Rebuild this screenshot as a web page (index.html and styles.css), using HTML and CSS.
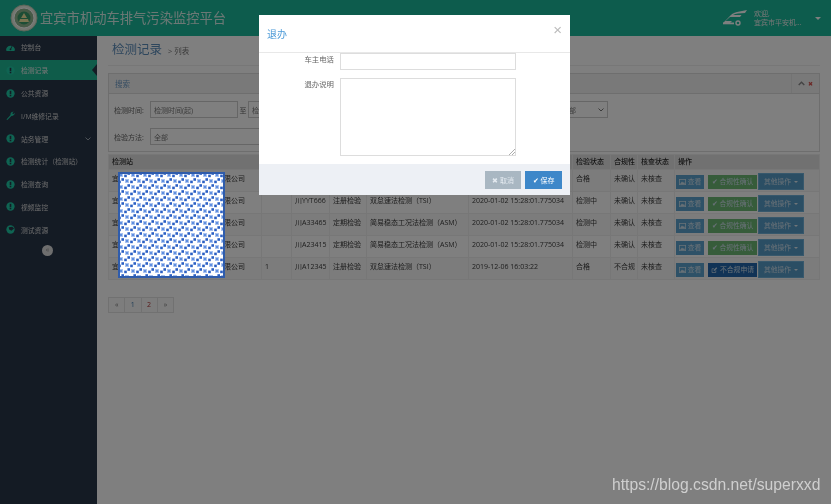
FILE: index.html
```html
<!DOCTYPE html>
<html lang="zh">
<head>
<meta charset="utf-8">
<title>检测记录</title>
<link rel="stylesheet" href="styles.css">
</head>
<body>
<svg class="defs" width="0" height="0">
  <defs>
    <symbol id="warn" viewBox="0 0 10 10"><circle cx="5" cy="5" r="4.6" fill="#1fc8a5"/><rect x="4.1" y="2" width="1.8" height="3.8" fill="#283649"/><rect x="4.1" y="6.5" width="1.8" height="1.6" fill="#283649"/></symbol>
    <symbol id="pic" viewBox="0 0 7 6"><rect x=".4" y=".4" width="6.2" height="5.2" fill="none" stroke="currentColor" stroke-width=".8"/><path d="M1 5 3 2.500 4.200 3.800 5 3 6 5z" fill="currentColor"/></symbol>
    <symbol id="edit" viewBox="0 0 7 7"><path d="M5 4v2.400H.6V2H3" fill="none" stroke="currentColor" stroke-width=".8"/><path d="M2.500 4.500 2.700 3.200 5.600.4 6.600 1.400 3.800 4.300z" fill="currentColor"/></symbol>
    <pattern id="dots" width="12" height="12" patternUnits="userSpaceOnUse">
      <rect width="12" height="12" fill="#fff"/>
      <rect x="1" y="1" width="4" height="4" fill="#a9c2ef"/><rect x="2" y="2" width="2" height="2" fill="#5f8fe0"/>
      <rect x="7" y="7" width="4" height="4" fill="#a9c2ef"/><rect x="8" y="8" width="2" height="2" fill="#5f8fe0"/>
      <rect x="6.200" y="2.600" width="2.600" height="2.600" fill="#2a5fc4"/><rect x="9.400" y="0.200" width="2.600" height="2.600" fill="#2a5fc4"/>
      <rect x="0.200" y="8.600" width="2.600" height="2.600" fill="#2a5fc4"/><rect x="3.400" y="6.200" width="2.600" height="2.600" fill="#2a5fc4"/>
    </pattern>
  </defs>
</svg>

<div class="app">
  <header class="topbar">
    <div class="brand">
      <svg class="emblem" width="28" height="28" viewBox="0 0 28 28">
        <circle cx="14" cy="14" r="13" fill="#e9efe2" stroke="#b8cbb2"/>
        <circle cx="14" cy="14" r="10" fill="#8fb58e" stroke="#fff"/>
        <circle cx="14" cy="14" r="6.5" fill="#3a9a6a"/>
        <path d="M9 18h10l-1-3h-8zM11 14l3-5 3 5z" fill="#f2e6a0"/>
      </svg>
      <span class="brand-name">宜宾市机动车排气污染监控平台</span>
    </div>
    <div class="account">
      <svg width="26" height="16" viewBox="0 0 26 16">
        <path d="M25 0 L15 2 Q10 3 7 7 L1 13 H8 L10 11 H3.5 L8 7 H18 L19.5 5 H11 Q13 3.5 16 3.5 L23 3 Z" fill="#fff"/>
        <rect x="1" y="12.5" width="11" height="1.8" fill="#fff"/>
        <circle cx="16" cy="13" r="2" fill="none" stroke="#fff" stroke-width="1.4"/>
      </svg>
      <div class="account-text"><span>欢迎,</span><span>宜宾市平安机...</span></div>
      <span class="caret-down"></span>
    </div>
  </header>

  <div class="body-row">
    <nav class="sidebar">
      <a class="nav-item">
        <svg class="nav-icon" viewBox="0 0 10 10"><path d="M0 8a5 5 0 0 1 10 0l-1 1H1z" fill="#1fc8a5"/><path d="M5 7 7 3" stroke="#283649"/><circle cx="5" cy="7" r="1" fill="#283649"/></svg>
        <span>控制台</span>
      </a>
      <a class="nav-item active">
        <svg class="nav-icon"><use href="#warn"/></svg>
        <span>检测记录</span>
      </a>
      <a class="nav-item"><svg class="nav-icon"><use href="#warn"/></svg><span>公共资源</span></a>
      <a class="nav-item">
        <svg class="nav-icon" viewBox="0 0 10 10"><path d="M0.5 9.5 5 4.5Q4.500 1 8.500 0.500L7 2.500 8 3.500 9.800 2Q9.500 5.500 6 5.500L1.500 10z" fill="#1fc8a5"/></svg>
        <span>I/M维修记录</span>
      </a>
      <a class="nav-item">
        <svg class="nav-icon"><use href="#warn"/></svg><span>站务管理</span>
        <svg class="chev" width="6" height="4" viewBox="0 0 6 4"><path d="M.5.500 3 3 5.500.5" fill="none" stroke="#9aa4ae"/></svg>
      </a>
      <a class="nav-item"><svg class="nav-icon"><use href="#warn"/></svg><span>检测统计（检测站）</span></a>
      <a class="nav-item"><svg class="nav-icon"><use href="#warn"/></svg><span>检测查询</span></a>
      <a class="nav-item"><svg class="nav-icon"><use href="#warn"/></svg><span>视频监控</span></a>
      <a class="nav-item">
        <svg class="nav-icon" viewBox="0 0 10 10"><circle cx="5" cy="5" r="4.6" fill="#1fc8a5"/><path d="M3 2.500 7 2 9 4 6 6.500 3.500 5z" fill="#283649"/></svg>
        <span>测试资源</span>
      </a>
      <div class="collapse-btn">«</div>
    </nav>

    <main class="content">
      <div class="page-head"><h1>检测记录</h1><small>&gt; 列表</small></div>

      <section class="panel">
        <div class="panel-head">
          <span>搜索</span>
          <div class="panel-tools">
            <svg width="7" height="5" viewBox="0 0 7 5"><path d="M.7 4 3.500 1.200 6.300 4" fill="none" stroke="#888" stroke-width="1.400"/></svg>
            <span class="panel-close">✖</span>
          </div>
        </div>
        <div class="panel-body">
          <div class="filter-row">
            <label>检测时间:</label>
            <span class="field w-date">检测时间(起)</span>
            <span class="to">至</span>
            <span class="field w-date2">检</span>
            <span class="field w-sel">部<svg width="6" height="4" viewBox="0 0 6 4"><path d="M.5.500 3 3 5.500.5" fill="none" stroke="#777"/></svg></span>
          </div>
          <div class="filter-row">
            <label>检验方法:</label>
            <span class="field w-method">全部</span>
          </div>
        </div>
      </section>

      <table class="records">
        <colgroup>
          <col class="c1"><col class="c2"><col class="c3"><col class="c4"><col class="c5"><col class="c6"><col class="c7"><col class="c8"><col class="c9"><col class="c10">
        </colgroup>
        <thead>
          <tr><th>检测站</th><th></th><th></th><th></th><th></th><th></th><th>检验状态</th><th>合规性</th><th>核查状态</th><th>操作</th></tr>
        </thead>
        <tbody>
          <tr class="odd"><td>宜宾市平安机动车辆环保检测服务有限公司</td><td></td><td></td><td></td><td></td><td></td><td>合格</td><td>未确认</td><td>未核查</td>
            <td><div class="ops"><a class="btn blue"><svg class="btn-icon"><use href="#pic"/></svg>查看</a><a class="btn green">✔ 合规性确认</a><a class="btn more">其他操作<i class="caret-small"></i></a></div></td></tr>
          <tr><td>宜宾市平安机动车辆环保检测服务有限公司</td><td></td><td>川YYT666</td><td>注册检验</td><td>双怠速法检测（TSI）</td><td>2020-01-02 15:28:01.775034</td><td>检测中</td><td>未确认</td><td>未核查</td>
            <td><div class="ops"><a class="btn blue"><svg class="btn-icon"><use href="#pic"/></svg>查看</a><a class="btn green">✔ 合规性确认</a><a class="btn more">其他操作<i class="caret-small"></i></a></div></td></tr>
          <tr class="odd"><td>宜宾市平安机动车辆环保检测服务有限公司</td><td></td><td>川A33465</td><td>定期检验</td><td>简易稳态工况法检测（ASM）</td><td>2020-01-02 15:28:01.775034</td><td>检测中</td><td>未确认</td><td>未核查</td>
            <td><div class="ops"><a class="btn blue"><svg class="btn-icon"><use href="#pic"/></svg>查看</a><a class="btn green">✔ 合规性确认</a><a class="btn more">其他操作<i class="caret-small"></i></a></div></td></tr>
          <tr><td>宜宾市平安机动车辆环保检测服务有限公司</td><td></td><td>川A23415</td><td>定期检验</td><td>简易稳态工况法检测（ASM）</td><td>2020-01-02 15:28:01.775034</td><td>检测中</td><td>未确认</td><td>未核查</td>
            <td><div class="ops"><a class="btn blue"><svg class="btn-icon"><use href="#pic"/></svg>查看</a><a class="btn green">✔ 合规性确认</a><a class="btn more">其他操作<i class="caret-small"></i></a></div></td></tr>
          <tr class="odd"><td>宜宾市平安机动车辆环保检测服务有限公司</td><td>1</td><td>川A12345</td><td>注册检验</td><td>双怠速法检测（TSI）</td><td>2019-12-06 16:03:22</td><td>合格</td><td>不合规</td><td>未核查</td>
            <td><div class="ops"><a class="btn blue"><svg class="btn-icon"><use href="#pic"/></svg>查看</a><a class="btn navy"><svg class="btn-icon"><use href="#edit"/></svg>不合规申请</a><a class="btn more">其他操作<i class="caret-small"></i></a></div></td></tr>
        </tbody>
      </table>

      <div class="pager"><a>«</a><a class="link">1</a><a class="current">2</a><a>»</a></div>
    </main>
  </div>
</div>

<svg class="qr" width="107" height="106"><rect width="107" height="106" fill="url(#dots)"/><rect x="1" y="1" width="105" height="104" fill="none" stroke="#2f5cab" stroke-width="2"/></svg>

<div class="overlay"></div>

<div class="modal">
  <div class="modal-head"><h2>退办</h2><span class="modal-close">×</span></div>
  <div class="modal-body">
    <div class="form-row"><label>车主电话</label><span class="input"></span></div>
    <div class="form-row"><label>退办说明</label>
      <span class="textarea"><svg class="grip" width="6" height="6" viewBox="0 0 6 6"><path d="M6 0 0 6M6 3 3 6" stroke="#999" stroke-width=".8"/></svg></span>
    </div>
  </div>
  <div class="modal-foot">
    <a class="mbtn cancel">✖ 取消</a>
    <a class="mbtn save">✔ 保存</a>
  </div>
</div>

<div class="watermark">https://blog.csdn.net/superxxd</div>
</body>
</html>
```
FILE: styles.css
```css
* { box-sizing: border-box; }
html, body { margin: 0; height: 100%; }
body {
  position: relative;
  overflow: hidden;
  background: #fff;
  font-family: "Open Sans", "Noto Sans CJK SC", sans-serif;
  font-size: 7px;
  color: #555;
  filter: blur(.45px);
}
.defs { position: absolute; }
.app { display: flex; flex-direction: column; height: 504px; }

.topbar {
  flex: 0 0 36px;
  display: flex;
  align-items: center;
  justify-content: space-between;
  background: #1ab89a;
  color: #fff;
  padding: 0 10px;
}
.brand { display: flex; align-items: center; gap: 2px; }
.brand-name { font-size: 13.3px; line-height: 18px; color: #d8f0ea; }
.account { display: flex; align-items: center; }
.account svg { margin-right: 6px; }
.account-text { display: flex; flex-direction: column; width: 58px; line-height: 9px; font-size: 7px; color: #eee; margin-right: 3px; }
.caret-down { width: 0; height: 0; border: 3px solid transparent; border-top: 3.500px solid #fff; border-bottom: 0; }

.body-row { flex: 1; display: flex; min-height: 0; }
.sidebar { flex: 0 0 97px; background: #283649; }
.nav-item {
  display: flex;
  align-items: center;
  position: relative;
  height: 22.750px;
  padding-left: 6px;
  gap: 6px;
  color: #d6d6d6;
  font-size: 6.800px;
}
.nav-item.active { background: #1fb894; color: #eee; height: 20px; margin: 1.500px 0; }
.nav-item.active::after {
  content: "";
  position: absolute;
  right: 0;
  top: 4px;
  border: 6px solid transparent;
  border-left: 0;
  border-right: 5px solid #283649;
}
.nav-icon { width: 9px; height: 9px; flex: none; }
.chev { position: absolute; right: 6px; top: 10px; }
.collapse-btn {
  width: 11px;
  height: 11px;
  margin: 4px 0 0 42px;
  border-radius: 50%;
  background: #ddd;
  color: #888;
  font-size: 7px;
  line-height: 10px;
  text-align: center;
}

.content { flex: 1; min-width: 0; background: #fff; padding: 0 11px; }
.page-head {
  display: flex;
  align-items: baseline;
  gap: 6px;
  height: 30px;
  margin-bottom: 7px;
  padding: 5px 4px 0;
  border-bottom: 1px solid #eee;
}
.page-head h1 { margin: 0; font-weight: 400; font-size: 12.500px; line-height: 18px; color: #5b8dbb; }
.page-head small { font-size: 7.500px; color: #777; }

.panel { height: 79px; border: 1px solid #ddd; margin-bottom: 2px; }
.panel-head {
  display: flex;
  justify-content: space-between;
  align-items: center;
  height: 20px;
  padding: 0 6px;
  background: #f2f2f2;
  border-bottom: 1px solid #ddd;
  color: #6c9ac5;
  font-size: 7.500px;
}
.panel-tools { display: flex; align-items: center; gap: 3px; height: 100%; padding-left: 6px; border-left: 1px solid #e6e6e6; }
.panel-close { color: #d9534f; font-size: 6px; }
.panel-body { display: flex; flex-direction: column; gap: 10px; padding: 7px 5px; }
.filter-row { display: flex; align-items: center; height: 17px; color: #666; }
.filter-row label { width: 36px; }
.field { display: flex; align-items: center; justify-content: space-between; height: 17px; padding: 0 3px; border: 1px solid #ccc; background: #fff; color: #777; }
.w-date { width: 88px; }
.to { width: 10px; text-align: center; }
.w-date2 { width: 130px; }
.w-sel { width: 100px; margin-left: 130px; gap: 2px; padding-left: 60px; }
.w-method { width: 400px; }

.records { width: 711px; table-layout: fixed; border-collapse: collapse; color: #3a3a3a; }
.c1 { width: 153px; } .c2 { width: 30px; } .c3 { width: 38px; } .c4 { width: 37px; } .c5 { width: 102px; }
.c6 { width: 104px; } .c7 { width: 38px; } .c8 { width: 27px; } .c9 { width: 37px; } .c10 { width: 145px; }
.records th, .records td {
  height: 22px;
  padding: 0 3px 4px;
  border: 1px solid #eee;
  font-size: 7px;
  line-height: 10px;
  font-weight: 400;
  text-align: left;
  white-space: nowrap;
  overflow: hidden;
}
.records th { height: 15px; padding: 0 3px; background: #e3e3e3; font-weight: 500; color: #2a2a2a; }
.records tr.odd td { background: #f8f8f8; }
.records td:last-child { padding: 2px 0 0 1px; }
.ops { display: flex; align-items: center; gap: 1px; }
.btn { display: flex; align-items: center; justify-content: center; gap: 2px; height: 14px; color: #cfe0ec; font-size: 6.800px; white-space: nowrap; }
.btn-icon { width: 7px; height: 6px; flex: none; }
.btn.blue { width: 28px; margin-right: 3px; background: #5ca3cf; }
.btn.green { width: 49px; background: #6cb974; }
.btn.navy { width: 49px; background: #2266ad; }
.btn.more { width: 46px; height: 17px; background: #579dc9; border: 1px solid #6fb0d8; gap: 3px; }
.caret-small { width: 0; height: 0; border: 2px solid transparent; border-top: 2.500px solid #dfeaf2; border-bottom: 0; }

.pager { display: flex; margin-top: 17px; }
.pager a { width: 17.250px; height: 16px; margin-left: -1px; border: 1px solid #e3e3e3; background: #fafafa; color: #777; line-height: 14px; text-align: center; }
.pager a:first-child { margin-left: 0; }
.pager .link { color: #3c78ad; }
.pager .current { color: #b03535; }

.qr { position: absolute; left: 118px; top: 172px; z-index: 2; }
.overlay { position: absolute; inset: 0; z-index: 1; background: rgba(0, 0, 0, .5); }

.modal {
  position: absolute;
  left: 259px;
  top: 15px;
  z-index: 3;
  display: flex;
  flex-direction: column;
  width: 311px;
  height: 180px;
  background: #fff;
}
.modal-head { display: flex; justify-content: space-between; height: 38px; padding: 8px 8px 0; border-bottom: 1px solid #e8e8e8; }
.modal-head h2 { margin: 0; font-weight: 400; font-size: 10px; line-height: 22px; color: #4d9bd8; }
.modal-close { font-size: 15px; line-height: 14px; color: #bbb; font-family: "Liberation Sans", sans-serif; }
.modal-body { flex: 1; display: flex; flex-direction: column; gap: 8px; }
.form-row { display: flex; gap: 6px; }
.form-row label { width: 75px; padding-top: 1px; line-height: 11px; font-size: 7.400px; color: #666; text-align: right; }
.input { width: 176px; height: 17px; border: 1px solid #ddd; }
.textarea { position: relative; width: 176px; height: 78px; border: 1px solid #ddd; }
.grip { position: absolute; right: 0; bottom: 0; }
.modal-foot { display: flex; justify-content: flex-end; align-items: center; gap: 4px; height: 31px; padding-right: 8px; background: #edf0f5; }
.mbtn { display: flex; align-items: center; justify-content: center; height: 18px; color: #e4eaf0; font-size: 7px; }
.cancel { width: 36px; background: #a9b7c2; }
.save { width: 37px; background: #3d87c9; color: #fff; }

.watermark {
  position: absolute;
  left: 612px;
  top: 475px;
  z-index: 4;
  font-family: "Liberation Sans", sans-serif;
  font-size: 15.700px;
  line-height: 20px;
  color: #cfcfcf;
}
```
